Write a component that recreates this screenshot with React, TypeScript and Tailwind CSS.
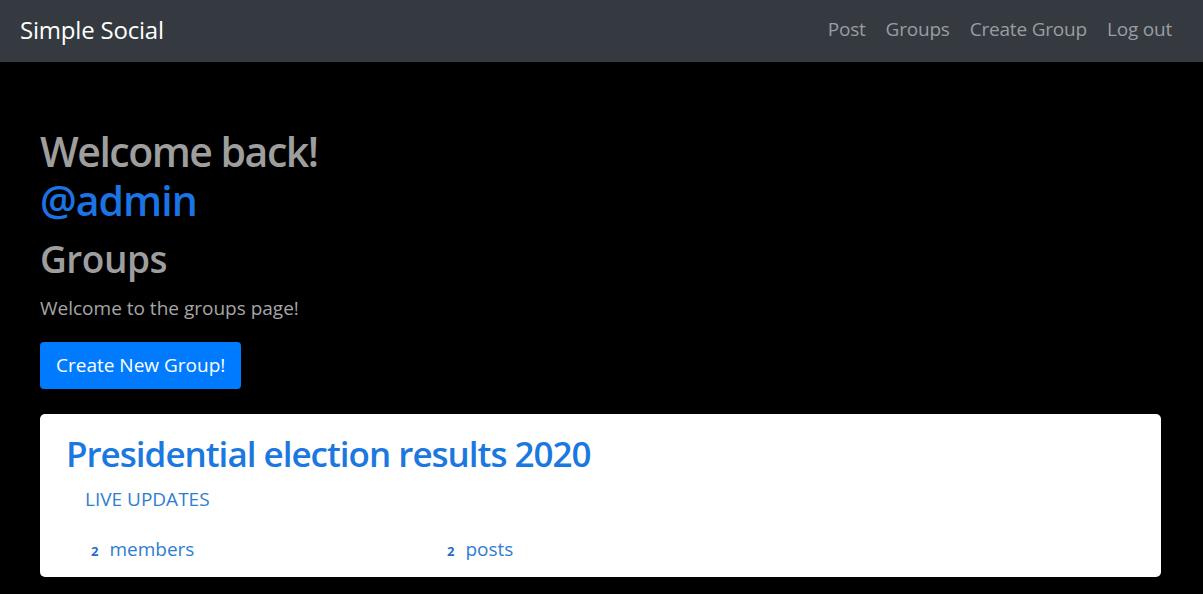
export default function App() {
  return (
    <div className="min-h-[594px] bg-black font-['Open_Sans',sans-serif]">
      <nav className="h-[62px] bg-[#343a40] flex items-center justify-between pl-[20px] pr-[31px] pb-[3px]">
        <a className="text-white text-[24px] leading-none tracking-[-0.2px]">Simple Social</a>
        <div className="flex items-center gap-[20px] text-[19px] text-[#9a9da0] tracking-[-0.2px]">
          <a>Post</a>
          <a>Groups</a>
          <a>Create Group</a>
          <a>Log out</a>
        </div>
      </nav>

      <main className="px-[40px] pt-[66px]">
        <h1 className="text-[41px] leading-[46px] font-semibold tracking-[-1.5px] text-[#9e9e9e]">Welcome back!</h1>
        <h1 className="mt-[3px] text-[41px] leading-[46px] font-semibold tracking-[-1px] text-[#1b74e4]">@admin</h1>
        <h2 className="mt-[14px] text-[37px] leading-[44px] font-semibold tracking-[-0.5px] text-[#9e9e9e]">Groups</h2>
        <p className="mt-[13px] text-[19px] leading-[28px] text-[#a6a6a6]">Welcome to the groups page!</p>
        <button className="mt-[20px] h-[47px] px-[16px] rounded-[4px] bg-[#007bff] text-white text-[19px]">
          Create New Group!
        </button>

        <div className="mt-[25px] mr-[2px] bg-white rounded-[5px] pt-[19px] pb-[14px] pl-[26px]">
          <h3 className="text-[35px] leading-[42px] font-semibold tracking-[-1px] text-[#1b78e0]">
            Presidential election results 2020
          </h3>
          <p className="mt-[10px] ml-[19px] text-[19px] text-[#2f7dd1]">LIVE UPDATES</p>
          <div className="mt-[21px] ml-[25px] flex text-[19px] text-[#2f7dd1]">
            <div className="w-[356px] flex items-baseline">
              <span className="text-[13px] font-bold text-[#1f6fc7] mr-[11px]">2</span>
              <span>members</span>
            </div>
            <div className="flex items-baseline">
              <span className="text-[13px] font-bold text-[#1f6fc7] mr-[11px]">2</span>
              <span>posts</span>
            </div>
          </div>
        </div>
      </main>
    </div>
  );
}
